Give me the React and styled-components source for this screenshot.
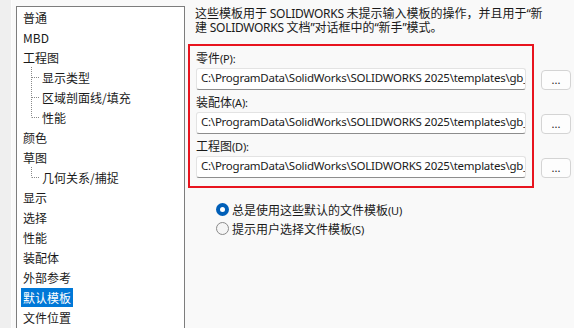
import React from "react";
import styled, { createGlobalStyle } from "styled-components";

const Global = createGlobalStyle`
  html, body { margin: 0; padding: 0; }
  body {
    background: #f9f9f9;
    overflow: hidden;
    font-family: "Noto Sans", "Noto Sans CJK SC", sans-serif;
    font-size: 12px;
    color: #1a1a1a;
  }
`;

const Window = styled.div`
  display: flex;
  height: 328px;
  width: 574px;
  overflow: hidden;
`;

const Strip = styled.div`
  width: 11px;
  flex: none;
  background: #efefef;
  border-right: 1px solid #fcfcfc;
`;

const TreeBox = styled.div`
  flex: none;
  margin: 6px 0 0 4px;
  width: 169px;
  height: 340px;
  background: #ffffff;
  border: 1px solid #7d7d7d;
  padding-left: 4px;
  box-sizing: border-box;
`;

const TreeRow = styled.div`
  display: flex;
  align-items: center;
  height: 20px;
`;

const TreeLabel = styled.span`
  display: inline-block;
  height: 19px;
  line-height: 19px;
  padding: 0 2px;
  font-family: "Noto Sans CJK SC", sans-serif;
  font-size: 12px;
  white-space: nowrap;
  background: ${(p) => (p.$selected ? "#0078d7" : "transparent")};
  color: ${(p) => (p.$selected ? "#ffffff" : "#1a1a1a")};
`;

const Connector = ({ last }) => (
  <svg width="19" height="20" style={{ flex: "none" }}>
    <line x1="10.5" y1="0" x2="10.5" y2={last ? 10.5 : 20} stroke="#8a8a8a" strokeDasharray="1 1" />
    <line x1="11" y1="10.5" x2="19" y2="10.5" stroke="#8a8a8a" strokeDasharray="1 1" />
  </svg>
);

const Panel = styled.div`
  flex: 1;
  display: flex;
  flex-direction: column;
  padding: 6px 0 0 10px;
`;

const Description = styled.div`
  font-family: "Noto Sans CJK SC", sans-serif;
  font-size: 12px;
  line-height: 13px;
  color: #1a1a1a;
  white-space: nowrap;
`;

const Latin = styled.span`
  font-family: "Noto Sans", sans-serif;
  letter-spacing: -0.3px;
`;

const FormArea = styled.div`
  position: relative;
  margin: 12px 0 0 1px;
  padding-top: 2px;
`;

const Highlight = styled.div`
  position: absolute;
  left: -8px;
  top: -2px;
  width: 346px;
  height: 144px;
  border: 2px solid #e8141e;
  box-sizing: border-box;
  pointer-events: none;
`;

const FieldLabel = styled.div`
  height: 20px;
  line-height: 20px;
  font-family: "Noto Sans CJK SC", sans-serif;
  font-size: 12px;
  color: #1a1a1a;
`;

const Mnemonic = styled.span`
  font-family: "Noto Sans", sans-serif;
  font-size: 11px;
  letter-spacing: -0.2px;
`;

const FieldRow = styled.div`
  display: flex;
  align-items: flex-start;
  margin-bottom: 2px;
`;

const PathBox = styled.div`
  width: 330px;
  height: 22px;
  box-sizing: border-box;
  background: #ffffff;
  border: 1px solid #e3e3e3;
  border-bottom: 1px solid #8d8d8d;
  border-radius: 3px;
  padding: 0 0 0 4px;
  overflow: hidden;
  white-space: nowrap;
  line-height: 18px;
  font-family: "Noto Sans", sans-serif;
  font-size: 11.5px;
  letter-spacing: -0.25px;
  color: #1a1a1a;
`;

const BrowseButton = styled.button`
  margin: 2px 0 0 15px;
  width: 30px;
  height: 20px;
  box-sizing: border-box;
  background: #fdfdfd;
  border: 1px solid #d4d4d4;
  border-radius: 4px;
  padding: 0;
  font-family: "Noto Sans", sans-serif;
  font-size: 11px;
  color: #1a1a1a;
  line-height: 16px;
`;

const RadioGroup = styled.div`
  margin: 20px 0 0 21px;
  display: flex;
  flex-direction: column;
`;

const RadioRow = styled.label`
  display: flex;
  align-items: center;
  height: 19px;
  gap: 3px;
  font-family: "Noto Sans CJK SC", sans-serif;
  font-size: 12px;
  color: #1a1a1a;
`;

const RadioDot = styled.span`
  width: 13px;
  height: 13px;
  box-sizing: border-box;
  border-radius: 50%;
  flex: none;
  background: ${(p) => (p.$on ? "#005fb8" : "#f5f5f5")};
  border: ${(p) => (p.$on ? "none" : "1px solid #8a8a8a")};
  display: flex;
  align-items: center;
  justify-content: center;
  &::after {
    content: "";
    display: ${(p) => (p.$on ? "block" : "none")};
    width: 5px;
    height: 5px;
    border-radius: 50%;
    background: #ffffff;
  }
`;

const treeItems = [
  { t: "普通" },
  { t: "MBD" },
  { t: "工程图" },
  { t: "显示类型", sub: true },
  { t: "区域剖面线/填充", sub: true },
  { t: "性能", sub: true, last: true },
  { t: "颜色" },
  { t: "草图" },
  { t: "几何关系/捕捉", sub: true, last: true },
  { t: "显示" },
  { t: "选择" },
  { t: "性能" },
  { t: "装配体" },
  { t: "外部参考" },
  { t: "默认模板", sel: true },
  { t: "文件位置" },
];

const fields = [
  { label: "零件", key: "(P):", path: "C:\\ProgramData\\SolidWorks\\SOLIDWORKS 2025\\templates\\gb_part.prtdot" },
  { label: "装配体", key: "(A):", path: "C:\\ProgramData\\SolidWorks\\SOLIDWORKS 2025\\templates\\gb_assembly.asmdot" },
  { label: "工程图", key: "(D):", path: "C:\\ProgramData\\SolidWorks\\SOLIDWORKS 2025\\templates\\gb_a4.drwdot" },
];

export default function App() {
  return (
    <>
      <Global />
      <Window>
        <Strip />
        <TreeBox>
          {treeItems.map((it, i) => (
            <TreeRow key={i}>
              {it.sub && <Connector last={it.last} />}
              <TreeLabel $selected={it.sel}>{it.t}</TreeLabel>
            </TreeRow>
          ))}
        </TreeBox>
        <Panel>
          <Description>
            这些模板用于<Latin> SOLIDWORKS </Latin>未提示输入模板的操作，并且用于<Latin>“</Latin>新
            <br />
            建<Latin> SOLIDWORKS </Latin>文档<Latin>”</Latin>对话框中的<Latin>“</Latin>新手<Latin>”</Latin>模式。
          </Description>
          <FormArea>
            {fields.map((f) => (
              <div key={f.label}>
                <FieldLabel>
                  {f.label}
                  <Mnemonic>{f.key}</Mnemonic>
                </FieldLabel>
                <FieldRow>
                  <PathBox>{f.path}</PathBox>
                  <BrowseButton>...</BrowseButton>
                </FieldRow>
              </div>
            ))}
            <Highlight />
          </FormArea>
          <RadioGroup>
            <RadioRow>
              <RadioDot $on />
              <span>
                总是使用这些默认的文件模板<Mnemonic>(U)</Mnemonic>
              </span>
            </RadioRow>
            <RadioRow>
              <RadioDot />
              <span>
                提示用户选择文件模板<Mnemonic>(S)</Mnemonic>
              </span>
            </RadioRow>
          </RadioGroup>
        </Panel>
      </Window>
    </>
  );
}
